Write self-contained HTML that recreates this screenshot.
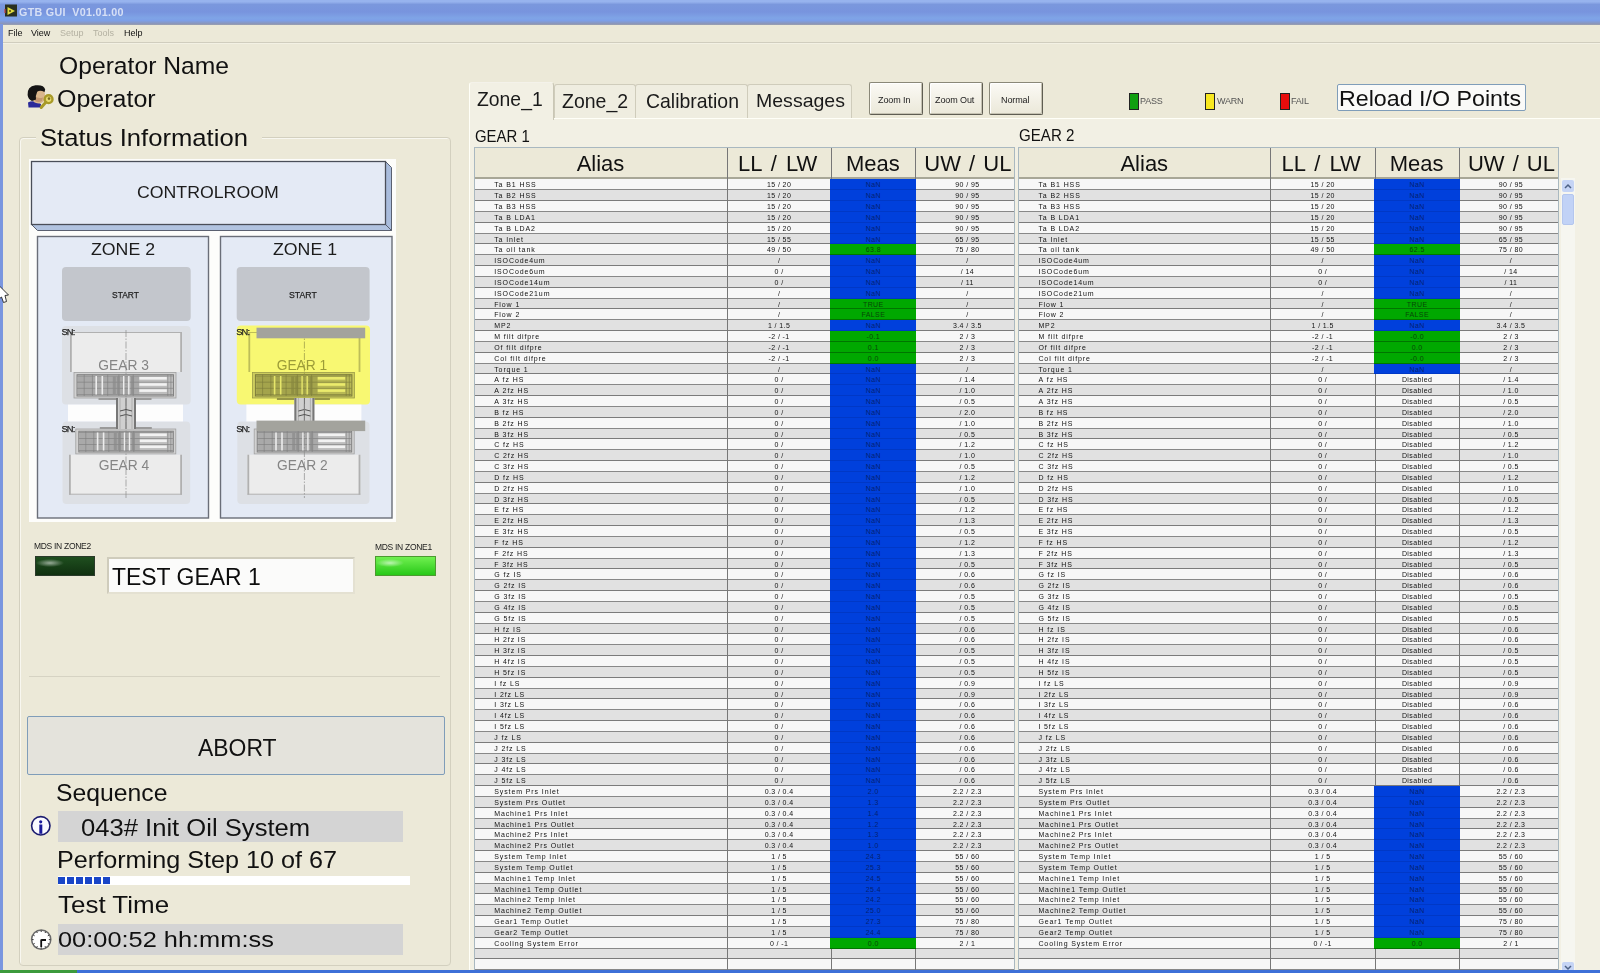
<!DOCTYPE html>
<html><head><meta charset="utf-8">
<style>
*{margin:0;padding:0;box-sizing:border-box}
html,body{width:1600px;height:973px;overflow:hidden;background:#ECE9D8;font-family:"Liberation Sans",sans-serif;color:#000}
.abs{position:absolute}
.t{position:absolute;white-space:pre;line-height:1}
#title{position:absolute;left:0;top:0;width:1600px;height:25px;background:linear-gradient(#97b3ee 0,#97b3ee 1.8px,#7a97dd 4.5px,#7894de 12px,#7fa4e6 18px,#7d9fe7 20.5px,#8a96bc 23.5px,#9aa0b0 25px)}
#lborder{position:absolute;left:0;top:24px;width:3px;height:949px;background:#7a96df}
#menubar{position:absolute;left:3px;top:25px;width:1597px;height:18px;background:#ECE9D8;border-bottom:1px solid #d0cdbe;box-shadow:0 1px 0 #f3f1e4}
.menu{position:absolute;top:28.5px;font-size:9px;color:#111}
.menu.dis{color:#b4b1a2}
#panel{position:absolute;left:469px;top:118px;width:1131px;height:855px;background:#F2F0E4;border-top:1px solid #fffff8;border-left:1px solid #fffff8}
.tab{position:absolute;background:#EFEDE0;border:1px solid #cfccbb;border-bottom:none;border-radius:3px 3px 0 0}
.tab.sel{background:#F2F0E4;border-color:#e0ddd0}
.tabt{position:absolute;font-size:19.5px;color:#1a1a1a;white-space:pre;line-height:1}
.btn{position:absolute;background:linear-gradient(#fbfaf5,#ebe8d9);border:1px solid #8a8878;border-right-color:#5f5d52;border-bottom-color:#5f5d52;box-shadow:inset -1px -1px 0 #c5c2b2, inset 1px 1px 0 #fff;border-radius:2px}
.btnt{position:absolute;font-size:9px;color:#222;white-space:pre;line-height:1;letter-spacing:-0.1px;margin-top:1px}
.leg{position:absolute;top:93px;width:10px;height:17px;border:1px solid #222}
.legt{position:absolute;top:97px;font-size:9px;color:#555;white-space:pre;line-height:1;letter-spacing:-0.2px}
.tbl{position:absolute;top:147px;height:826px;background:#fff;border:1px solid #a9b8c0;border-bottom:none;overflow:hidden}
.hdr{position:absolute;left:0;top:0;height:31px;background:#ECE9D8;border-bottom:2px solid #a8a797}
.h{position:absolute;top:5px;text-align:center;font-size:22px;white-space:pre;line-height:1;color:#111}
.row{position:absolute;left:0;width:100%;height:10.834px}
.rl{position:absolute;left:0;bottom:0;width:100%;height:1px;background:rgba(0,0,0,0.45)}
.row.w{background:#F7F7F7}
.row.g{background:#E1E1E1}
.c{position:absolute;top:1px;height:9.8px;font-size:7px;line-height:9px;white-space:pre;color:#111;letter-spacing:0.9px}
.c.a{left:19px}
.c.n{text-align:center;letter-spacing:0.4px}
.mb{background:#0040DC;color:#052070;top:0;height:10.834px;padding-top:1px;z-index:2;box-shadow:inset 0 -1px 0 rgba(0,0,40,0.12)}
.mg{background:#00A800;color:#074707;top:0;height:10.834px;padding-top:1px;z-index:2;box-shadow:inset 0 -1px 0 rgba(0,0,0,0.3)}
.vl{position:absolute;top:0;width:1px;height:826px;background:#777}
</style></head><body>
<!-- title bar -->
<div id="title"></div>
<svg class="abs" style="left:3px;top:3px" width="16" height="15" viewBox="0 0 16 15"><rect x="2" y="1.5" width="12" height="12" fill="#2a3020"/><path d="M4.5 4 L12 8 L4.5 12 Z" fill="#e0dc40"/><circle cx="7" cy="8" r="1" fill="#504010"/><rect x="1" y="6" width="2" height="4" fill="#c04040" opacity="0.6"/></svg>
<div class="t" style="left:19px;top:7px;font-size:11px;font-weight:bold;color:#d6e0f6;letter-spacing:0.3px;transform:scaleX(0.975);transform-origin:0 0">GTB GUI&nbsp; V01.01.00</div>
<div id="lborder"></div>
<svg class="abs" style="left:0;top:284px;z-index:5" width="12" height="20" viewBox="0 284 12 20"><path d="M-1 285.5 L8.5 295 L5 295.5 L6.5 301.5 L3.5 302.5 L1.5 297 L-1 299 Z" fill="#fff" stroke="#222" stroke-width="0.9"/></svg>
<div id="menubar"></div>
<div class="t menu" style="left:8px">File</div>
<div class="t menu" style="left:31px">View</div>
<div class="t menu dis" style="left:60px">Setup</div>
<div class="t menu dis" style="left:93px">Tools</div>
<div class="t menu" style="left:124px">Help</div>

<!-- left panel -->
<!-- operator icon -->
<svg class="abs" style="left:26px;top:84px" width="30" height="28" viewBox="26 84 30 28">
 <path d="M28 102.5 Q31 100.5 36 101.5 L41 104 L40.5 107.5 L28.5 107.5 Z" fill="#2a2a9a"/>
 <path d="M34 91 Q39 88.5 44.5 90.5 L45.2 97 Q44.5 103.5 38.5 103.5 Q33 103 32.5 99 Z" fill="#d9b68c"/>
 <path d="M34.5 96 Q38 99 43 97.5 L42 101 Q38 103 35 101 Z" fill="#b08060" opacity="0.6"/>
 <path d="M27.6 95 Q27 86.5 35.5 85.3 Q44 84.5 45.2 89.5 L44.5 92 Q40 89.8 37.2 91.8 Q35.4 95.5 36 99.5 L32 101 Q28.2 99.5 27.6 95 Z" fill="#141414"/>
 <circle cx="48.6" cy="99.2" r="3.9" fill="#e8dc70" stroke="#a89a28" stroke-width="2.4"/>
 <circle cx="49" cy="98.6" r="1.3" fill="#7a6e20"/>
 <path d="M45.8 102.2 L41.2 107.5" stroke="#a89a28" stroke-width="3" stroke-linecap="round"/>
</svg>

<!-- group box -->
<div class="abs" style="left:19px;top:137px;width:432px;height:829px;border:1px solid #d3d0bf;border-radius:4px;box-shadow:inset 1px 1px 0 #f8f7f0"></div>
<div class="abs" style="left:36px;top:128px;width:226px;height:20px;background:#ECE9D8"></div>

<!-- diagram -->
<div class="abs" style="left:29px;top:159px;width:367px;height:363px;background:#fdfdfb"></div>
<svg class="abs" style="left:29px;top:159px" width="367" height="363" viewBox="29 159 367 363">
 <polygon points="31.5,224.5 385.5,224.5 391.5,230.5 37.5,230.5" fill="#b1c3e0" stroke="#5a6070" stroke-width="1"/>
 <polygon points="385.5,161.5 391.5,167.5 391.5,230.5 385.5,224.5" fill="#a9bcdc" stroke="#5a6070" stroke-width="1"/>
 <rect x="31.5" y="161.5" width="354" height="63" fill="#e4eaf5" stroke="#4a4e58" stroke-width="1.3"/>
 <rect x="37.5" y="236.5" width="171" height="281.5" fill="#e4eaf5" stroke="#6a6e78" stroke-width="1.4"/>
 <rect x="220.5" y="236.5" width="171.5" height="281.5" fill="#e4eaf5" stroke="#6a6e78" stroke-width="1.4"/>
 <rect x="62" y="267" width="128.7" height="54" rx="4" fill="#c3c6cc"/>
 <rect x="236.7" y="267" width="132.9" height="54" rx="4" fill="#c3c6cc"/>
</svg>
<svg class="abs" style="left:0;top:0" width="400" height="530" viewBox="0 0 400 530">
<rect x="62" y="326" width="128.7" height="78.5" rx="4" fill="#dde0e5"/>
<rect x="62.5" y="421.4" width="127.69999999999999" height="82.6" rx="4" fill="#dde0e5"/>
<rect x="68" y="404.6" width="115" height="16.8" fill="#fdfdfd"/>
<rect x="70" y="332" width="112" height="40" fill="#ececec"/>
<rect x="70" y="332" width="1.8" height="40" fill="#b0b0b0"/>
<rect x="180.2" y="332" width="1.8" height="40" fill="#b0b0b0"/>
<rect x="70" y="332" width="112" height="1" fill="#b0b0b0"/>
<rect x="74" y="372.5" width="102" height="25.5" fill="#d2d2d2" stroke="#a0a0a0" stroke-width="0.8"/>
<rect x="77" y="374.7" width="96.5" height="21.3" fill="#bdbdbd" stroke="#7c7c7c" stroke-width="0.9"/>
<rect x="78" y="376.0" width="61.199999999999996" height="18.5" fill="#a9a9a9"/>
<line x1="77" y1="376.0" x2="173" y2="376.0" stroke="#7c7c7c" stroke-width="0.6"/>
<line x1="77" y1="382.2" x2="173" y2="382.2" stroke="#7c7c7c" stroke-width="0.6"/>
<line x1="77" y1="388.3" x2="173" y2="388.3" stroke="#7c7c7c" stroke-width="0.6"/>
<line x1="77" y1="394.5" x2="173" y2="394.5" stroke="#7c7c7c" stroke-width="0.6"/>
<rect x="139.3" y="377.0" width="27.5" height="2.6" fill="#f2f2f2"/>
<rect x="139.3" y="383.2" width="27.5" height="2.6" fill="#f2f2f2"/>
<rect x="139.3" y="389.3" width="27.5" height="2.6" fill="#f2f2f2"/>
<rect x="95.4" y="376.0" width="1.6" height="18.5" fill="#ededed"/>
<rect x="101.5" y="376.0" width="1.6" height="18.5" fill="#ededed"/>
<rect x="123.0" y="376.0" width="1.4" height="18.5" fill="#ededed"/>
<rect x="128.1" y="376.0" width="1.4" height="18.5" fill="#ededed"/>
<line x1="84.2" y1="374.5" x2="84.2" y2="396.0" stroke="#7c7c7c" stroke-width="0.6"/>
<line x1="92.4" y1="374.5" x2="92.4" y2="396.0" stroke="#7c7c7c" stroke-width="0.6"/>
<line x1="107.7" y1="374.5" x2="107.7" y2="396.0" stroke="#7c7c7c" stroke-width="0.6"/>
<line x1="118.9" y1="374.5" x2="118.9" y2="396.0" stroke="#7c7c7c" stroke-width="0.6"/>
<line x1="133.2" y1="374.5" x2="133.2" y2="396.0" stroke="#7c7c7c" stroke-width="0.6"/>
<line x1="167.8" y1="374.5" x2="167.8" y2="396.0" stroke="#7c7c7c" stroke-width="0.6"/>
<line x1="170.9" y1="374.5" x2="170.9" y2="396.0" stroke="#7c7c7c" stroke-width="0.6"/>
<rect x="112.8" y="376.5" width="3" height="17.5" fill="#8a8a8a" opacity="0.7"/>
<rect x="116.8" y="376.5" width="3" height="17.5" fill="#8a8a8a" opacity="0.7"/>
<rect x="131.1" y="376.5" width="3" height="17.5" fill="#8a8a8a" opacity="0.7"/>
<rect x="98.5" y="398.0" width="53.0" height="2" fill="#9a9a9a"/>
<rect x="75.8" y="429" width="100" height="25" fill="#d2d2d2" stroke="#a0a0a0" stroke-width="0.8"/>
<rect x="78.8" y="431.2" width="94.5" height="20.8" fill="#bdbdbd" stroke="#7c7c7c" stroke-width="0.9"/>
<rect x="79.8" y="432.5" width="60.0" height="18" fill="#a9a9a9"/>
<line x1="78.8" y1="432.5" x2="172.8" y2="432.5" stroke="#7c7c7c" stroke-width="0.6"/>
<line x1="78.8" y1="438.5" x2="172.8" y2="438.5" stroke="#7c7c7c" stroke-width="0.6"/>
<line x1="78.8" y1="444.5" x2="172.8" y2="444.5" stroke="#7c7c7c" stroke-width="0.6"/>
<line x1="78.8" y1="450.5" x2="172.8" y2="450.5" stroke="#7c7c7c" stroke-width="0.6"/>
<rect x="139.8" y="433.5" width="27.0" height="2.6" fill="#f2f2f2"/>
<rect x="139.8" y="439.5" width="27.0" height="2.6" fill="#f2f2f2"/>
<rect x="139.8" y="445.5" width="27.0" height="2.6" fill="#f2f2f2"/>
<rect x="96.8" y="432.5" width="1.6" height="18" fill="#ededed"/>
<rect x="102.8" y="432.5" width="1.6" height="18" fill="#ededed"/>
<rect x="123.8" y="432.5" width="1.4" height="18" fill="#ededed"/>
<rect x="128.8" y="432.5" width="1.4" height="18" fill="#ededed"/>
<line x1="85.8" y1="431" x2="85.8" y2="452" stroke="#7c7c7c" stroke-width="0.6"/>
<line x1="93.8" y1="431" x2="93.8" y2="452" stroke="#7c7c7c" stroke-width="0.6"/>
<line x1="108.8" y1="431" x2="108.8" y2="452" stroke="#7c7c7c" stroke-width="0.6"/>
<line x1="119.8" y1="431" x2="119.8" y2="452" stroke="#7c7c7c" stroke-width="0.6"/>
<line x1="133.8" y1="431" x2="133.8" y2="452" stroke="#7c7c7c" stroke-width="0.6"/>
<line x1="167.8" y1="431" x2="167.8" y2="452" stroke="#7c7c7c" stroke-width="0.6"/>
<line x1="170.8" y1="431" x2="170.8" y2="452" stroke="#7c7c7c" stroke-width="0.6"/>
<rect x="113.8" y="433" width="3" height="17" fill="#8a8a8a" opacity="0.7"/>
<rect x="117.8" y="433" width="3" height="17" fill="#8a8a8a" opacity="0.7"/>
<rect x="131.8" y="433" width="3" height="17" fill="#8a8a8a" opacity="0.7"/>
<rect x="99.8" y="427" width="52.0" height="2" fill="#9a9a9a"/>
<rect x="69" y="454.7" width="113" height="40" fill="#ececec"/>
<rect x="69" y="454.7" width="1.8" height="40" fill="#b0b0b0"/>
<rect x="180.2" y="454.7" width="1.8" height="40" fill="#b0b0b0"/>
<rect x="69" y="493.7" width="113" height="1" fill="#b0b0b0"/>
<rect x="116" y="398" width="20" height="31" fill="#d0d0d0"/>
<rect x="116" y="398" width="2" height="31" fill="#777"/>
<rect x="134" y="398" width="2" height="31" fill="#777"/>
<line x1="126.0" y1="398" x2="126.0" y2="429" stroke="#6a6a6a" stroke-width="1"/>
<line x1="120" y1="398" x2="120" y2="429" stroke="#999" stroke-width="0.6"/>
<line x1="132" y1="398" x2="132" y2="429" stroke="#999" stroke-width="0.6"/>
<path d="M120 411.0 L126.0 409.5 L132 411.0" stroke="#444" stroke-width="0.9" fill="none"/>
<path d="M120 416.0 L126.0 414.5 L132 416.0" stroke="#444" stroke-width="0.9" fill="none"/>
<line x1="126" y1="330" x2="126" y2="498" stroke="#8c8c8c" stroke-width="0.7" stroke-dasharray="7 1.5 1.5 1.5"/>
<text x="123.6" y="370.3" font-family="Liberation Sans" font-size="13.8" fill="#858585" text-anchor="middle">GEAR 3</text>
<text x="124" y="470" font-family="Liberation Sans" font-size="13.8" fill="#858585" text-anchor="middle">GEAR 4</text>
<text x="61.4" y="335" font-family="Liberation Sans" font-size="9.3" fill="#222" stroke="#222" stroke-width="0.25" letter-spacing="-0.8">SN:</text>
<text x="61.4" y="431.5" font-family="Liberation Sans" font-size="9.3" fill="#222" stroke="#222" stroke-width="0.25" letter-spacing="-0.8">SN:</text>
<rect x="236.8" y="325.6" width="133.2" height="79" rx="4" fill="#f8f872"/>
<rect x="237.3" y="421.4" width="132.2" height="82.6" rx="4" fill="#dde0e5"/>
<rect x="246.4" y="404.6" width="115" height="16.8" fill="#fdfdfd"/>
<g style="mix-blend-mode:multiply">
<rect x="248.4" y="332" width="112" height="40" fill="#ffffff"/>
<rect x="248.4" y="332" width="1.8" height="40" fill="#c4c4c4"/>
<rect x="358.59999999999997" y="332" width="1.8" height="40" fill="#c4c4c4"/>
<rect x="248.4" y="332" width="112" height="1" fill="#c4c4c4"/>
<rect x="252.4" y="372.5" width="102" height="25.5" fill="#d2d2d2" stroke="#a0a0a0" stroke-width="0.8"/>
<rect x="255.4" y="374.7" width="96.5" height="21.3" fill="#bdbdbd" stroke="#7c7c7c" stroke-width="0.9"/>
<rect x="256.4" y="376.0" width="61.199999999999996" height="18.5" fill="#a9a9a9"/>
<line x1="255.4" y1="376.0" x2="351.4" y2="376.0" stroke="#7c7c7c" stroke-width="0.6"/>
<line x1="255.4" y1="382.2" x2="351.4" y2="382.2" stroke="#7c7c7c" stroke-width="0.6"/>
<line x1="255.4" y1="388.3" x2="351.4" y2="388.3" stroke="#7c7c7c" stroke-width="0.6"/>
<line x1="255.4" y1="394.5" x2="351.4" y2="394.5" stroke="#7c7c7c" stroke-width="0.6"/>
<rect x="317.7" y="377.0" width="27.5" height="2.6" fill="#f2f2f2"/>
<rect x="317.7" y="383.2" width="27.5" height="2.6" fill="#f2f2f2"/>
<rect x="317.7" y="389.3" width="27.5" height="2.6" fill="#f2f2f2"/>
<rect x="273.8" y="376.0" width="1.6" height="18.5" fill="#ededed"/>
<rect x="279.9" y="376.0" width="1.6" height="18.5" fill="#ededed"/>
<rect x="301.4" y="376.0" width="1.4" height="18.5" fill="#ededed"/>
<rect x="306.5" y="376.0" width="1.4" height="18.5" fill="#ededed"/>
<line x1="262.6" y1="374.5" x2="262.6" y2="396.0" stroke="#7c7c7c" stroke-width="0.6"/>
<line x1="270.8" y1="374.5" x2="270.8" y2="396.0" stroke="#7c7c7c" stroke-width="0.6"/>
<line x1="286.1" y1="374.5" x2="286.1" y2="396.0" stroke="#7c7c7c" stroke-width="0.6"/>
<line x1="297.3" y1="374.5" x2="297.3" y2="396.0" stroke="#7c7c7c" stroke-width="0.6"/>
<line x1="311.6" y1="374.5" x2="311.6" y2="396.0" stroke="#7c7c7c" stroke-width="0.6"/>
<line x1="346.2" y1="374.5" x2="346.2" y2="396.0" stroke="#7c7c7c" stroke-width="0.6"/>
<line x1="349.3" y1="374.5" x2="349.3" y2="396.0" stroke="#7c7c7c" stroke-width="0.6"/>
<rect x="291.2" y="376.5" width="3" height="17.5" fill="#8a8a8a" opacity="0.7"/>
<rect x="295.2" y="376.5" width="3" height="17.5" fill="#8a8a8a" opacity="0.7"/>
<rect x="309.5" y="376.5" width="3" height="17.5" fill="#8a8a8a" opacity="0.7"/>
<rect x="276.9" y="398.0" width="53.0" height="2" fill="#9a9a9a"/>
<line x1="304.4" y1="330" x2="304.4" y2="404" stroke="#9a9a9a" stroke-width="0.7" stroke-dasharray="7 1.5 1.5 1.5"/>
</g>
<rect x="254.2" y="429" width="100" height="25" fill="#d2d2d2" stroke="#a0a0a0" stroke-width="0.8"/>
<rect x="257.2" y="431.2" width="94.5" height="20.8" fill="#bdbdbd" stroke="#7c7c7c" stroke-width="0.9"/>
<rect x="258.2" y="432.5" width="60.0" height="18" fill="#a9a9a9"/>
<line x1="257.2" y1="432.5" x2="351.2" y2="432.5" stroke="#7c7c7c" stroke-width="0.6"/>
<line x1="257.2" y1="438.5" x2="351.2" y2="438.5" stroke="#7c7c7c" stroke-width="0.6"/>
<line x1="257.2" y1="444.5" x2="351.2" y2="444.5" stroke="#7c7c7c" stroke-width="0.6"/>
<line x1="257.2" y1="450.5" x2="351.2" y2="450.5" stroke="#7c7c7c" stroke-width="0.6"/>
<rect x="318.2" y="433.5" width="27.0" height="2.6" fill="#f2f2f2"/>
<rect x="318.2" y="439.5" width="27.0" height="2.6" fill="#f2f2f2"/>
<rect x="318.2" y="445.5" width="27.0" height="2.6" fill="#f2f2f2"/>
<rect x="275.2" y="432.5" width="1.6" height="18" fill="#ededed"/>
<rect x="281.2" y="432.5" width="1.6" height="18" fill="#ededed"/>
<rect x="302.2" y="432.5" width="1.4" height="18" fill="#ededed"/>
<rect x="307.2" y="432.5" width="1.4" height="18" fill="#ededed"/>
<line x1="264.2" y1="431" x2="264.2" y2="452" stroke="#7c7c7c" stroke-width="0.6"/>
<line x1="272.2" y1="431" x2="272.2" y2="452" stroke="#7c7c7c" stroke-width="0.6"/>
<line x1="287.2" y1="431" x2="287.2" y2="452" stroke="#7c7c7c" stroke-width="0.6"/>
<line x1="298.2" y1="431" x2="298.2" y2="452" stroke="#7c7c7c" stroke-width="0.6"/>
<line x1="312.2" y1="431" x2="312.2" y2="452" stroke="#7c7c7c" stroke-width="0.6"/>
<line x1="346.2" y1="431" x2="346.2" y2="452" stroke="#7c7c7c" stroke-width="0.6"/>
<line x1="349.2" y1="431" x2="349.2" y2="452" stroke="#7c7c7c" stroke-width="0.6"/>
<rect x="292.2" y="433" width="3" height="17" fill="#8a8a8a" opacity="0.7"/>
<rect x="296.2" y="433" width="3" height="17" fill="#8a8a8a" opacity="0.7"/>
<rect x="310.2" y="433" width="3" height="17" fill="#8a8a8a" opacity="0.7"/>
<rect x="278.2" y="427" width="52.0" height="2" fill="#9a9a9a"/>
<rect x="247.4" y="454.7" width="113" height="40" fill="#ececec"/>
<rect x="247.4" y="454.7" width="1.8" height="40" fill="#b0b0b0"/>
<rect x="358.59999999999997" y="454.7" width="1.8" height="40" fill="#b0b0b0"/>
<rect x="247.4" y="493.7" width="113" height="1" fill="#b0b0b0"/>
<rect x="294.4" y="398" width="20" height="31" fill="#d0d0d0"/>
<rect x="294.4" y="398" width="2" height="31" fill="#777"/>
<rect x="312.4" y="398" width="2" height="31" fill="#777"/>
<line x1="304.4" y1="398" x2="304.4" y2="429" stroke="#6a6a6a" stroke-width="1"/>
<line x1="298.4" y1="398" x2="298.4" y2="429" stroke="#999" stroke-width="0.6"/>
<line x1="310.4" y1="398" x2="310.4" y2="429" stroke="#999" stroke-width="0.6"/>
<path d="M298.4 411.0 L304.4 409.5 L310.4 411.0" stroke="#444" stroke-width="0.9" fill="none"/>
<path d="M298.4 416.0 L304.4 414.5 L310.4 416.0" stroke="#444" stroke-width="0.9" fill="none"/>
<line x1="304.4" y1="404" x2="304.4" y2="498" stroke="#8c8c8c" stroke-width="0.7" stroke-dasharray="7 1.5 1.5 1.5"/>
<text x="302.0" y="370.3" font-family="Liberation Sans" font-size="13.8" fill="#9c9c38" text-anchor="middle">GEAR 1</text>
<text x="302.4" y="470" font-family="Liberation Sans" font-size="13.8" fill="#858585" text-anchor="middle">GEAR 2</text>
<rect x="256.5" y="327.7" width="108.7" height="10.6" fill="#a3a39d"/>
<rect x="256.5" y="420.6" width="108.7" height="10.5" fill="#a3a39d"/>
<text x="236.20000000000002" y="335" font-family="Liberation Sans" font-size="9.3" fill="#222" stroke="#222" stroke-width="0.25" letter-spacing="-0.8">SN:</text>
<text x="236.20000000000002" y="431.5" font-family="Liberation Sans" font-size="9.3" fill="#222" stroke="#222" stroke-width="0.25" letter-spacing="-0.8">SN:</text>
</svg>

<!-- MDS -->
<div class="t" style="left:34px;top:542px;font-size:8.5px;color:#222;letter-spacing:-0.3px">MDS IN ZONE2</div>
<div class="abs" style="left:35px;top:556px;width:60px;height:20px;background:radial-gradient(ellipse 14px 4px at 14px 6px,rgba(255,255,255,0.55),rgba(255,255,255,0) 100%),linear-gradient(#1f4f1f,#103010);border:1px solid #2a3a2a"></div>
<div class="t" style="left:375px;top:543px;font-size:8.5px;color:#222;letter-spacing:-0.3px">MDS IN ZONE1</div>
<div class="abs" style="left:375px;top:556px;width:61px;height:20px;background:radial-gradient(ellipse 14px 4px at 14px 6px,rgba(255,255,255,0.6),rgba(255,255,255,0) 100%),linear-gradient(#70f050,#28c818);border:1px solid #4c9a30"></div>
<div class="abs" style="left:107px;top:557px;width:248px;height:37px;background:#fbfbfa;border:2px solid #e4e1d2;border-top-color:#cfccbc;border-left-color:#cfccbc"></div>

<div class="abs" style="left:29px;top:676px;width:411px;height:1px;background:#d6d3c3"></div>
<div class="abs" style="left:27px;top:716px;width:418px;height:59px;background:#e4e3dc;border:1px solid #7f9db9;border-radius:2px"></div>

<div class="abs" style="left:57.5px;top:810.5px;width:345px;height:31.5px;background:#d4d4d4"></div>
<svg class="abs" style="left:30px;top:815px" width="22" height="22" viewBox="0 0 22 22"><circle cx="10.8" cy="10.8" r="9.2" fill="#fafaff" stroke="#1c1c70" stroke-width="1.6"/><circle cx="10.7" cy="6.8" r="1.6" fill="#1a1a9a"/><rect x="9.3" y="9.5" width="3" height="9.3" fill="#1a1a9a"/></svg>
<div class="abs" style="left:57.5px;top:876px;width:352px;height:8.5px;background:#fff"></div>
<div class="abs" style="left:58px;top:877px;width:54px;height:7px;background:repeating-linear-gradient(90deg,#1a46c8 0,#1a46c8 7px,transparent 7px,transparent 9px)"></div>
<div class="abs" style="left:57.5px;top:924px;width:345px;height:31px;background:#d4d4d4"></div>
<svg class="abs" style="left:30px;top:928px" width="22" height="23" viewBox="0 0 22 23"><circle cx="11.2" cy="11.6" r="9.6" fill="#fff" stroke="#6a6a6a" stroke-width="1.5"/><line x1="18.80" y1="11.60" x2="20.40" y2="11.60" stroke="#333" stroke-width="1"/><line x1="17.78" y1="15.40" x2="19.17" y2="16.20" stroke="#333" stroke-width="1"/><line x1="15.00" y1="18.18" x2="15.80" y2="19.57" stroke="#333" stroke-width="1"/><line x1="11.20" y1="19.20" x2="11.20" y2="20.80" stroke="#333" stroke-width="1"/><line x1="7.40" y1="18.18" x2="6.60" y2="19.57" stroke="#333" stroke-width="1"/><line x1="4.62" y1="15.40" x2="3.23" y2="16.20" stroke="#333" stroke-width="1"/><line x1="3.60" y1="11.60" x2="2.00" y2="11.60" stroke="#333" stroke-width="1"/><line x1="4.62" y1="7.80" x2="3.23" y2="7.00" stroke="#333" stroke-width="1"/><line x1="7.40" y1="5.02" x2="6.60" y2="3.63" stroke="#333" stroke-width="1"/><line x1="11.20" y1="4.00" x2="11.20" y2="2.40" stroke="#333" stroke-width="1"/><line x1="15.00" y1="5.02" x2="15.80" y2="3.63" stroke="#333" stroke-width="1"/><line x1="17.78" y1="7.80" x2="19.17" y2="7.00" stroke="#333" stroke-width="1"/><path d="M11.2 11.6 V19 M11.2 12 H16" stroke="#111" stroke-width="1.8"/></svg>

<!-- right side -->
<div id="panel"></div>
<div class="tab" style="left:554px;top:84px;width:82px;height:34px"></div>
<div class="tab" style="left:635px;top:84px;width:113px;height:34px"></div>
<div class="tab" style="left:747px;top:84px;width:105px;height:34px"></div>
<div class="tab sel" style="left:469px;top:82px;width:85px;height:38px;border-bottom:none;background:#F2F0E4;border-left-color:#fffff8;border-top-color:#f4f2ea;border-right-color:#c9c6b5"></div>

<div class="btn" style="left:869px;top:82px;width:54px;height:33px"></div>
<div class="btnt" style="left:878px;top:95px">Zoom In</div>
<div class="btn" style="left:929px;top:82px;width:54px;height:33px"></div>
<div class="btnt" style="left:935px;top:95px">Zoom Out</div>
<div class="btn" style="left:989px;top:82px;width:54px;height:33px"></div>
<div class="btnt" style="left:1001px;top:95px">Normal</div>

<div class="leg" style="left:1129px;background:#10a010"></div>
<div class="legt" style="left:1140px">PASS</div>
<div class="leg" style="left:1205px;background:#f8e820"></div>
<div class="legt" style="left:1217px">WARN</div>
<div class="leg" style="left:1280px;background:#e80c0c"></div>
<div class="legt" style="left:1291px">FAIL</div>

<div class="abs" style="left:1337px;top:84px;width:189px;height:27px;background:#fafaf8;border:1px solid #7f9db9;border-radius:2px"></div>


<div class="tbl" style="left:474.2px;width:541.3px">
<div class="hdr" style="width:539.3px"><span class="h" style="left:-1px;width:252.6px">Alias</span><span class="h" style="left:250.1px;width:104.6px;word-spacing:3px">LL / LW</span><span class="h" style="left:355.7px;width:83.9px">Meas</span><span class="h" style="left:443.6px;width:98.2px;word-spacing:2px">UW / UL</span></div>
<div class="row w" style="top:31.40px"><span class="c a">Ta&nbsp;B1&nbsp;HSS</span><span class="c n" style="left:251.6px;width:104.6px">15 / 20</span><span class="c n mb" style="left:355.2px;width:85.9px">NaN</span><span class="c n" style="left:442.1px;width:100.2px">90 / 95</span><i class="rl"></i></div>
<div class="row g" style="top:42.23px"><span class="c a">Ta&nbsp;B2&nbsp;HSS</span><span class="c n" style="left:251.6px;width:104.6px">15 / 20</span><span class="c n mb" style="left:355.2px;width:85.9px">NaN</span><span class="c n" style="left:442.1px;width:100.2px">90 / 95</span><i class="rl"></i></div>
<div class="row w" style="top:53.07px"><span class="c a">Ta&nbsp;B3&nbsp;HSS</span><span class="c n" style="left:251.6px;width:104.6px">15 / 20</span><span class="c n mb" style="left:355.2px;width:85.9px">NaN</span><span class="c n" style="left:442.1px;width:100.2px">90 / 95</span><i class="rl"></i></div>
<div class="row g" style="top:63.90px"><span class="c a">Ta&nbsp;B&nbsp;LDA1</span><span class="c n" style="left:251.6px;width:104.6px">15 / 20</span><span class="c n mb" style="left:355.2px;width:85.9px">NaN</span><span class="c n" style="left:442.1px;width:100.2px">90 / 95</span><i class="rl"></i></div>
<div class="row w" style="top:74.74px"><span class="c a">Ta&nbsp;B&nbsp;LDA2</span><span class="c n" style="left:251.6px;width:104.6px">15 / 20</span><span class="c n mb" style="left:355.2px;width:85.9px">NaN</span><span class="c n" style="left:442.1px;width:100.2px">90 / 95</span><i class="rl"></i></div>
<div class="row g" style="top:85.57px"><span class="c a">Ta&nbsp;Inlet</span><span class="c n" style="left:251.6px;width:104.6px">15 / 55</span><span class="c n mb" style="left:355.2px;width:85.9px">NaN</span><span class="c n" style="left:442.1px;width:100.2px">65 / 95</span><i class="rl"></i></div>
<div class="row w" style="top:96.40px"><span class="c a">Ta&nbsp;oil&nbsp;tank</span><span class="c n" style="left:251.6px;width:104.6px">49 / 50</span><span class="c n mg" style="left:355.2px;width:85.9px">63.8</span><span class="c n" style="left:442.1px;width:100.2px">75 / 80</span><i class="rl"></i></div>
<div class="row g" style="top:107.24px"><span class="c a">ISOCode4um</span><span class="c n" style="left:251.6px;width:104.6px">/</span><span class="c n mb" style="left:355.2px;width:85.9px">NaN</span><span class="c n" style="left:442.1px;width:100.2px">/</span><i class="rl"></i></div>
<div class="row w" style="top:118.07px"><span class="c a">ISOCode6um</span><span class="c n" style="left:251.6px;width:104.6px">0 /</span><span class="c n mb" style="left:355.2px;width:85.9px">NaN</span><span class="c n" style="left:442.1px;width:100.2px">/ 14</span><i class="rl"></i></div>
<div class="row g" style="top:128.91px"><span class="c a">ISOCode14um</span><span class="c n" style="left:251.6px;width:104.6px">0 /</span><span class="c n mb" style="left:355.2px;width:85.9px">NaN</span><span class="c n" style="left:442.1px;width:100.2px">/ 11</span><i class="rl"></i></div>
<div class="row w" style="top:139.74px"><span class="c a">ISOCode21um</span><span class="c n" style="left:251.6px;width:104.6px">/</span><span class="c n mb" style="left:355.2px;width:85.9px">NaN</span><span class="c n" style="left:442.1px;width:100.2px">/</span><i class="rl"></i></div>
<div class="row g" style="top:150.57px"><span class="c a">Flow&nbsp;1</span><span class="c n" style="left:251.6px;width:104.6px">/</span><span class="c n mg" style="left:355.2px;width:85.9px">TRUE</span><span class="c n" style="left:442.1px;width:100.2px">/</span><i class="rl"></i></div>
<div class="row w" style="top:161.41px"><span class="c a">Flow&nbsp;2</span><span class="c n" style="left:251.6px;width:104.6px">/</span><span class="c n mg" style="left:355.2px;width:85.9px">FALSE</span><span class="c n" style="left:442.1px;width:100.2px">/</span><i class="rl"></i></div>
<div class="row g" style="top:172.24px"><span class="c a">MP2</span><span class="c n" style="left:251.6px;width:104.6px">1 / 1.5</span><span class="c n mb" style="left:355.2px;width:85.9px">NaN</span><span class="c n" style="left:442.1px;width:100.2px">3.4 / 3.5</span><i class="rl"></i></div>
<div class="row w" style="top:183.08px"><span class="c a">M&nbsp;filt&nbsp;difpre</span><span class="c n" style="left:251.6px;width:104.6px">-2 / -1</span><span class="c n mg" style="left:355.2px;width:85.9px">-0.1</span><span class="c n" style="left:442.1px;width:100.2px">2 / 3</span><i class="rl"></i></div>
<div class="row g" style="top:193.91px"><span class="c a">Of&nbsp;filt&nbsp;difpre</span><span class="c n" style="left:251.6px;width:104.6px">-2 / -1</span><span class="c n mg" style="left:355.2px;width:85.9px">0.1</span><span class="c n" style="left:442.1px;width:100.2px">2 / 3</span><i class="rl"></i></div>
<div class="row w" style="top:204.74px"><span class="c a">Col&nbsp;filt&nbsp;difpre</span><span class="c n" style="left:251.6px;width:104.6px">-2 / -1</span><span class="c n mg" style="left:355.2px;width:85.9px">0.0</span><span class="c n" style="left:442.1px;width:100.2px">2 / 3</span><i class="rl"></i></div>
<div class="row g" style="top:215.58px"><span class="c a">Torque&nbsp;1</span><span class="c n" style="left:251.6px;width:104.6px">/</span><span class="c n mb" style="left:355.2px;width:85.9px">NaN</span><span class="c n" style="left:442.1px;width:100.2px">/</span><i class="rl"></i></div>
<div class="row w" style="top:226.41px"><span class="c a">A&nbsp;fz&nbsp;HS</span><span class="c n" style="left:251.6px;width:104.6px">0 /</span><span class="c n mb" style="left:355.2px;width:85.9px">NaN</span><span class="c n" style="left:442.1px;width:100.2px">/ 1.4</span><i class="rl"></i></div>
<div class="row g" style="top:237.25px"><span class="c a">A&nbsp;2fz&nbsp;HS</span><span class="c n" style="left:251.6px;width:104.6px">0 /</span><span class="c n mb" style="left:355.2px;width:85.9px">NaN</span><span class="c n" style="left:442.1px;width:100.2px">/ 1.0</span><i class="rl"></i></div>
<div class="row w" style="top:248.08px"><span class="c a">A&nbsp;3fz&nbsp;HS</span><span class="c n" style="left:251.6px;width:104.6px">0 /</span><span class="c n mb" style="left:355.2px;width:85.9px">NaN</span><span class="c n" style="left:442.1px;width:100.2px">/ 0.5</span><i class="rl"></i></div>
<div class="row g" style="top:258.91px"><span class="c a">B&nbsp;fz&nbsp;HS</span><span class="c n" style="left:251.6px;width:104.6px">0 /</span><span class="c n mb" style="left:355.2px;width:85.9px">NaN</span><span class="c n" style="left:442.1px;width:100.2px">/ 2.0</span><i class="rl"></i></div>
<div class="row w" style="top:269.75px"><span class="c a">B&nbsp;2fz&nbsp;HS</span><span class="c n" style="left:251.6px;width:104.6px">0 /</span><span class="c n mb" style="left:355.2px;width:85.9px">NaN</span><span class="c n" style="left:442.1px;width:100.2px">/ 1.0</span><i class="rl"></i></div>
<div class="row g" style="top:280.58px"><span class="c a">B&nbsp;3fz&nbsp;HS</span><span class="c n" style="left:251.6px;width:104.6px">0 /</span><span class="c n mb" style="left:355.2px;width:85.9px">NaN</span><span class="c n" style="left:442.1px;width:100.2px">/ 0.5</span><i class="rl"></i></div>
<div class="row w" style="top:291.42px"><span class="c a">C&nbsp;fz&nbsp;HS</span><span class="c n" style="left:251.6px;width:104.6px">0 /</span><span class="c n mb" style="left:355.2px;width:85.9px">NaN</span><span class="c n" style="left:442.1px;width:100.2px">/ 1.2</span><i class="rl"></i></div>
<div class="row g" style="top:302.25px"><span class="c a">C&nbsp;2fz&nbsp;HS</span><span class="c n" style="left:251.6px;width:104.6px">0 /</span><span class="c n mb" style="left:355.2px;width:85.9px">NaN</span><span class="c n" style="left:442.1px;width:100.2px">/ 1.0</span><i class="rl"></i></div>
<div class="row w" style="top:313.08px"><span class="c a">C&nbsp;3fz&nbsp;HS</span><span class="c n" style="left:251.6px;width:104.6px">0 /</span><span class="c n mb" style="left:355.2px;width:85.9px">NaN</span><span class="c n" style="left:442.1px;width:100.2px">/ 0.5</span><i class="rl"></i></div>
<div class="row g" style="top:323.92px"><span class="c a">D&nbsp;fz&nbsp;HS</span><span class="c n" style="left:251.6px;width:104.6px">0 /</span><span class="c n mb" style="left:355.2px;width:85.9px">NaN</span><span class="c n" style="left:442.1px;width:100.2px">/ 1.2</span><i class="rl"></i></div>
<div class="row w" style="top:334.75px"><span class="c a">D&nbsp;2fz&nbsp;HS</span><span class="c n" style="left:251.6px;width:104.6px">0 /</span><span class="c n mb" style="left:355.2px;width:85.9px">NaN</span><span class="c n" style="left:442.1px;width:100.2px">/ 1.0</span><i class="rl"></i></div>
<div class="row g" style="top:345.59px"><span class="c a">D&nbsp;3fz&nbsp;HS</span><span class="c n" style="left:251.6px;width:104.6px">0 /</span><span class="c n mb" style="left:355.2px;width:85.9px">NaN</span><span class="c n" style="left:442.1px;width:100.2px">/ 0.5</span><i class="rl"></i></div>
<div class="row w" style="top:356.42px"><span class="c a">E&nbsp;fz&nbsp;HS</span><span class="c n" style="left:251.6px;width:104.6px">0 /</span><span class="c n mb" style="left:355.2px;width:85.9px">NaN</span><span class="c n" style="left:442.1px;width:100.2px">/ 1.2</span><i class="rl"></i></div>
<div class="row g" style="top:367.25px"><span class="c a">E&nbsp;2fz&nbsp;HS</span><span class="c n" style="left:251.6px;width:104.6px">0 /</span><span class="c n mb" style="left:355.2px;width:85.9px">NaN</span><span class="c n" style="left:442.1px;width:100.2px">/ 1.3</span><i class="rl"></i></div>
<div class="row w" style="top:378.09px"><span class="c a">E&nbsp;3fz&nbsp;HS</span><span class="c n" style="left:251.6px;width:104.6px">0 /</span><span class="c n mb" style="left:355.2px;width:85.9px">NaN</span><span class="c n" style="left:442.1px;width:100.2px">/ 0.5</span><i class="rl"></i></div>
<div class="row g" style="top:388.92px"><span class="c a">F&nbsp;fz&nbsp;HS</span><span class="c n" style="left:251.6px;width:104.6px">0 /</span><span class="c n mb" style="left:355.2px;width:85.9px">NaN</span><span class="c n" style="left:442.1px;width:100.2px">/ 1.2</span><i class="rl"></i></div>
<div class="row w" style="top:399.76px"><span class="c a">F&nbsp;2fz&nbsp;HS</span><span class="c n" style="left:251.6px;width:104.6px">0 /</span><span class="c n mb" style="left:355.2px;width:85.9px">NaN</span><span class="c n" style="left:442.1px;width:100.2px">/ 1.3</span><i class="rl"></i></div>
<div class="row g" style="top:410.59px"><span class="c a">F&nbsp;3fz&nbsp;HS</span><span class="c n" style="left:251.6px;width:104.6px">0 /</span><span class="c n mb" style="left:355.2px;width:85.9px">NaN</span><span class="c n" style="left:442.1px;width:100.2px">/ 0.5</span><i class="rl"></i></div>
<div class="row w" style="top:421.42px"><span class="c a">G&nbsp;fz&nbsp;IS</span><span class="c n" style="left:251.6px;width:104.6px">0 /</span><span class="c n mb" style="left:355.2px;width:85.9px">NaN</span><span class="c n" style="left:442.1px;width:100.2px">/ 0.6</span><i class="rl"></i></div>
<div class="row g" style="top:432.26px"><span class="c a">G&nbsp;2fz&nbsp;IS</span><span class="c n" style="left:251.6px;width:104.6px">0 /</span><span class="c n mb" style="left:355.2px;width:85.9px">NaN</span><span class="c n" style="left:442.1px;width:100.2px">/ 0.6</span><i class="rl"></i></div>
<div class="row w" style="top:443.09px"><span class="c a">G&nbsp;3fz&nbsp;IS</span><span class="c n" style="left:251.6px;width:104.6px">0 /</span><span class="c n mb" style="left:355.2px;width:85.9px">NaN</span><span class="c n" style="left:442.1px;width:100.2px">/ 0.5</span><i class="rl"></i></div>
<div class="row g" style="top:453.93px"><span class="c a">G&nbsp;4fz&nbsp;IS</span><span class="c n" style="left:251.6px;width:104.6px">0 /</span><span class="c n mb" style="left:355.2px;width:85.9px">NaN</span><span class="c n" style="left:442.1px;width:100.2px">/ 0.5</span><i class="rl"></i></div>
<div class="row w" style="top:464.76px"><span class="c a">G&nbsp;5fz&nbsp;IS</span><span class="c n" style="left:251.6px;width:104.6px">0 /</span><span class="c n mb" style="left:355.2px;width:85.9px">NaN</span><span class="c n" style="left:442.1px;width:100.2px">/ 0.5</span><i class="rl"></i></div>
<div class="row g" style="top:475.59px"><span class="c a">H&nbsp;fz&nbsp;IS</span><span class="c n" style="left:251.6px;width:104.6px">0 /</span><span class="c n mb" style="left:355.2px;width:85.9px">NaN</span><span class="c n" style="left:442.1px;width:100.2px">/ 0.6</span><i class="rl"></i></div>
<div class="row w" style="top:486.43px"><span class="c a">H&nbsp;2fz&nbsp;IS</span><span class="c n" style="left:251.6px;width:104.6px">0 /</span><span class="c n mb" style="left:355.2px;width:85.9px">NaN</span><span class="c n" style="left:442.1px;width:100.2px">/ 0.6</span><i class="rl"></i></div>
<div class="row g" style="top:497.26px"><span class="c a">H&nbsp;3fz&nbsp;IS</span><span class="c n" style="left:251.6px;width:104.6px">0 /</span><span class="c n mb" style="left:355.2px;width:85.9px">NaN</span><span class="c n" style="left:442.1px;width:100.2px">/ 0.5</span><i class="rl"></i></div>
<div class="row w" style="top:508.10px"><span class="c a">H&nbsp;4fz&nbsp;IS</span><span class="c n" style="left:251.6px;width:104.6px">0 /</span><span class="c n mb" style="left:355.2px;width:85.9px">NaN</span><span class="c n" style="left:442.1px;width:100.2px">/ 0.5</span><i class="rl"></i></div>
<div class="row g" style="top:518.93px"><span class="c a">H&nbsp;5fz&nbsp;IS</span><span class="c n" style="left:251.6px;width:104.6px">0 /</span><span class="c n mb" style="left:355.2px;width:85.9px">NaN</span><span class="c n" style="left:442.1px;width:100.2px">/ 0.5</span><i class="rl"></i></div>
<div class="row w" style="top:529.76px"><span class="c a">I&nbsp;fz&nbsp;LS</span><span class="c n" style="left:251.6px;width:104.6px">0 /</span><span class="c n mb" style="left:355.2px;width:85.9px">NaN</span><span class="c n" style="left:442.1px;width:100.2px">/ 0.9</span><i class="rl"></i></div>
<div class="row g" style="top:540.60px"><span class="c a">I&nbsp;2fz&nbsp;LS</span><span class="c n" style="left:251.6px;width:104.6px">0 /</span><span class="c n mb" style="left:355.2px;width:85.9px">NaN</span><span class="c n" style="left:442.1px;width:100.2px">/ 0.9</span><i class="rl"></i></div>
<div class="row w" style="top:551.43px"><span class="c a">I&nbsp;3fz&nbsp;LS</span><span class="c n" style="left:251.6px;width:104.6px">0 /</span><span class="c n mb" style="left:355.2px;width:85.9px">NaN</span><span class="c n" style="left:442.1px;width:100.2px">/ 0.6</span><i class="rl"></i></div>
<div class="row g" style="top:562.27px"><span class="c a">I&nbsp;4fz&nbsp;LS</span><span class="c n" style="left:251.6px;width:104.6px">0 /</span><span class="c n mb" style="left:355.2px;width:85.9px">NaN</span><span class="c n" style="left:442.1px;width:100.2px">/ 0.6</span><i class="rl"></i></div>
<div class="row w" style="top:573.10px"><span class="c a">I&nbsp;5fz&nbsp;LS</span><span class="c n" style="left:251.6px;width:104.6px">0 /</span><span class="c n mb" style="left:355.2px;width:85.9px">NaN</span><span class="c n" style="left:442.1px;width:100.2px">/ 0.6</span><i class="rl"></i></div>
<div class="row g" style="top:583.93px"><span class="c a">J&nbsp;fz&nbsp;LS</span><span class="c n" style="left:251.6px;width:104.6px">0 /</span><span class="c n mb" style="left:355.2px;width:85.9px">NaN</span><span class="c n" style="left:442.1px;width:100.2px">/ 0.6</span><i class="rl"></i></div>
<div class="row w" style="top:594.77px"><span class="c a">J&nbsp;2fz&nbsp;LS</span><span class="c n" style="left:251.6px;width:104.6px">0 /</span><span class="c n mb" style="left:355.2px;width:85.9px">NaN</span><span class="c n" style="left:442.1px;width:100.2px">/ 0.6</span><i class="rl"></i></div>
<div class="row g" style="top:605.60px"><span class="c a">J&nbsp;3fz&nbsp;LS</span><span class="c n" style="left:251.6px;width:104.6px">0 /</span><span class="c n mb" style="left:355.2px;width:85.9px">NaN</span><span class="c n" style="left:442.1px;width:100.2px">/ 0.6</span><i class="rl"></i></div>
<div class="row w" style="top:616.44px"><span class="c a">J&nbsp;4fz&nbsp;LS</span><span class="c n" style="left:251.6px;width:104.6px">0 /</span><span class="c n mb" style="left:355.2px;width:85.9px">NaN</span><span class="c n" style="left:442.1px;width:100.2px">/ 0.6</span><i class="rl"></i></div>
<div class="row g" style="top:627.27px"><span class="c a">J&nbsp;5fz&nbsp;LS</span><span class="c n" style="left:251.6px;width:104.6px">0 /</span><span class="c n mb" style="left:355.2px;width:85.9px">NaN</span><span class="c n" style="left:442.1px;width:100.2px">/ 0.6</span><i class="rl"></i></div>
<div class="row w" style="top:638.10px"><span class="c a">System&nbsp;Prs&nbsp;Inlet</span><span class="c n" style="left:251.6px;width:104.6px">0.3 / 0.4</span><span class="c n mb" style="left:355.2px;width:85.9px">2.0</span><span class="c n" style="left:442.1px;width:100.2px">2.2 / 2.3</span><i class="rl"></i></div>
<div class="row g" style="top:648.94px"><span class="c a">System&nbsp;Prs&nbsp;Outlet</span><span class="c n" style="left:251.6px;width:104.6px">0.3 / 0.4</span><span class="c n mb" style="left:355.2px;width:85.9px">1.3</span><span class="c n" style="left:442.1px;width:100.2px">2.2 / 2.3</span><i class="rl"></i></div>
<div class="row w" style="top:659.77px"><span class="c a">Machine1&nbsp;Prs&nbsp;Inlet</span><span class="c n" style="left:251.6px;width:104.6px">0.3 / 0.4</span><span class="c n mb" style="left:355.2px;width:85.9px">1.4</span><span class="c n" style="left:442.1px;width:100.2px">2.2 / 2.3</span><i class="rl"></i></div>
<div class="row g" style="top:670.61px"><span class="c a">Machine1&nbsp;Prs&nbsp;Outlet</span><span class="c n" style="left:251.6px;width:104.6px">0.3 / 0.4</span><span class="c n mb" style="left:355.2px;width:85.9px">1.2</span><span class="c n" style="left:442.1px;width:100.2px">2.2 / 2.3</span><i class="rl"></i></div>
<div class="row w" style="top:681.44px"><span class="c a">Machine2&nbsp;Prs&nbsp;Inlet</span><span class="c n" style="left:251.6px;width:104.6px">0.3 / 0.4</span><span class="c n mb" style="left:355.2px;width:85.9px">1.3</span><span class="c n" style="left:442.1px;width:100.2px">2.2 / 2.3</span><i class="rl"></i></div>
<div class="row g" style="top:692.27px"><span class="c a">Machine2&nbsp;Prs&nbsp;Outlet</span><span class="c n" style="left:251.6px;width:104.6px">0.3 / 0.4</span><span class="c n mb" style="left:355.2px;width:85.9px">1.0</span><span class="c n" style="left:442.1px;width:100.2px">2.2 / 2.3</span><i class="rl"></i></div>
<div class="row w" style="top:703.11px"><span class="c a">System&nbsp;Temp&nbsp;Inlet</span><span class="c n" style="left:251.6px;width:104.6px">1 / 5</span><span class="c n mb" style="left:355.2px;width:85.9px">24.3</span><span class="c n" style="left:442.1px;width:100.2px">55 / 60</span><i class="rl"></i></div>
<div class="row g" style="top:713.94px"><span class="c a">System&nbsp;Temp&nbsp;Outlet</span><span class="c n" style="left:251.6px;width:104.6px">1 / 5</span><span class="c n mb" style="left:355.2px;width:85.9px">25.3</span><span class="c n" style="left:442.1px;width:100.2px">55 / 60</span><i class="rl"></i></div>
<div class="row w" style="top:724.78px"><span class="c a">Machine1&nbsp;Temp&nbsp;Inlet</span><span class="c n" style="left:251.6px;width:104.6px">1 / 5</span><span class="c n mb" style="left:355.2px;width:85.9px">24.5</span><span class="c n" style="left:442.1px;width:100.2px">55 / 60</span><i class="rl"></i></div>
<div class="row g" style="top:735.61px"><span class="c a">Machine1&nbsp;Temp&nbsp;Outlet</span><span class="c n" style="left:251.6px;width:104.6px">1 / 5</span><span class="c n mb" style="left:355.2px;width:85.9px">25.4</span><span class="c n" style="left:442.1px;width:100.2px">55 / 60</span><i class="rl"></i></div>
<div class="row w" style="top:746.44px"><span class="c a">Machine2&nbsp;Temp&nbsp;Inlet</span><span class="c n" style="left:251.6px;width:104.6px">1 / 5</span><span class="c n mb" style="left:355.2px;width:85.9px">24.2</span><span class="c n" style="left:442.1px;width:100.2px">55 / 60</span><i class="rl"></i></div>
<div class="row g" style="top:757.28px"><span class="c a">Machine2&nbsp;Temp&nbsp;Outlet</span><span class="c n" style="left:251.6px;width:104.6px">1 / 5</span><span class="c n mb" style="left:355.2px;width:85.9px">25.0</span><span class="c n" style="left:442.1px;width:100.2px">55 / 60</span><i class="rl"></i></div>
<div class="row w" style="top:768.11px"><span class="c a">Gear1&nbsp;Temp&nbsp;Outlet</span><span class="c n" style="left:251.6px;width:104.6px">1 / 5</span><span class="c n mb" style="left:355.2px;width:85.9px">27.3</span><span class="c n" style="left:442.1px;width:100.2px">75 / 80</span><i class="rl"></i></div>
<div class="row g" style="top:778.95px"><span class="c a">Gear2&nbsp;Temp&nbsp;Outlet</span><span class="c n" style="left:251.6px;width:104.6px">1 / 5</span><span class="c n mb" style="left:355.2px;width:85.9px">24.4</span><span class="c n" style="left:442.1px;width:100.2px">75 / 80</span><i class="rl"></i></div>
<div class="row w" style="top:789.78px"><span class="c a">Cooling&nbsp;System&nbsp;Error</span><span class="c n" style="left:251.6px;width:104.6px">0 / -1</span><span class="c n mg" style="left:355.2px;width:85.9px">0.0</span><span class="c n" style="left:442.1px;width:100.2px">2 / 1</span><i class="rl"></i></div>
<div class="row g" style="top:800.61px"><span class="c a"></span><span class="c n" style="left:251.6px;width:104.6px"></span><span class="c n" style="left:356.2px;width:83.9px"></span><span class="c n" style="left:442.1px;width:100.2px"></span><i class="rl"></i></div>
<div class="row w" style="top:811.45px"><span class="c a"></span><span class="c n" style="left:251.6px;width:104.6px"></span><span class="c n" style="left:356.2px;width:83.9px"></span><span class="c n" style="left:442.1px;width:100.2px"></span><i class="rl"></i></div>
<div class="vl" style="left:251.6px"></div>
<div class="vl" style="left:356.2px"></div>
<div class="vl" style="left:440.1px"></div>
</div>
<div class="tbl" style="left:1018.4px;width:540.3px">
<div class="hdr" style="width:538.3px"><span class="h" style="left:-1px;width:251.8px">Alias</span><span class="h" style="left:249.3px;width:104.9px;word-spacing:3px">LL / LW</span><span class="h" style="left:355.2px;width:84.1px">Meas</span><span class="h" style="left:443.3px;width:97.5px;word-spacing:2px">UW / UL</span></div>
<div class="row w" style="top:31.40px"><span class="c a">Ta&nbsp;B1&nbsp;HSS</span><span class="c n" style="left:250.8px;width:104.9px">15 / 20</span><span class="c n mb" style="left:354.7px;width:86.1px">NaN</span><span class="c n" style="left:441.8px;width:99.5px">90 / 95</span><i class="rl"></i></div>
<div class="row g" style="top:42.23px"><span class="c a">Ta&nbsp;B2&nbsp;HSS</span><span class="c n" style="left:250.8px;width:104.9px">15 / 20</span><span class="c n mb" style="left:354.7px;width:86.1px">NaN</span><span class="c n" style="left:441.8px;width:99.5px">90 / 95</span><i class="rl"></i></div>
<div class="row w" style="top:53.07px"><span class="c a">Ta&nbsp;B3&nbsp;HSS</span><span class="c n" style="left:250.8px;width:104.9px">15 / 20</span><span class="c n mb" style="left:354.7px;width:86.1px">NaN</span><span class="c n" style="left:441.8px;width:99.5px">90 / 95</span><i class="rl"></i></div>
<div class="row g" style="top:63.90px"><span class="c a">Ta&nbsp;B&nbsp;LDA1</span><span class="c n" style="left:250.8px;width:104.9px">15 / 20</span><span class="c n mb" style="left:354.7px;width:86.1px">NaN</span><span class="c n" style="left:441.8px;width:99.5px">90 / 95</span><i class="rl"></i></div>
<div class="row w" style="top:74.74px"><span class="c a">Ta&nbsp;B&nbsp;LDA2</span><span class="c n" style="left:250.8px;width:104.9px">15 / 20</span><span class="c n mb" style="left:354.7px;width:86.1px">NaN</span><span class="c n" style="left:441.8px;width:99.5px">90 / 95</span><i class="rl"></i></div>
<div class="row g" style="top:85.57px"><span class="c a">Ta&nbsp;Inlet</span><span class="c n" style="left:250.8px;width:104.9px">15 / 55</span><span class="c n mb" style="left:354.7px;width:86.1px">NaN</span><span class="c n" style="left:441.8px;width:99.5px">65 / 95</span><i class="rl"></i></div>
<div class="row w" style="top:96.40px"><span class="c a">Ta&nbsp;oil&nbsp;tank</span><span class="c n" style="left:250.8px;width:104.9px">49 / 50</span><span class="c n mg" style="left:354.7px;width:86.1px">62.5</span><span class="c n" style="left:441.8px;width:99.5px">75 / 80</span><i class="rl"></i></div>
<div class="row g" style="top:107.24px"><span class="c a">ISOCode4um</span><span class="c n" style="left:250.8px;width:104.9px">/</span><span class="c n mb" style="left:354.7px;width:86.1px">NaN</span><span class="c n" style="left:441.8px;width:99.5px">/</span><i class="rl"></i></div>
<div class="row w" style="top:118.07px"><span class="c a">ISOCode6um</span><span class="c n" style="left:250.8px;width:104.9px">0 /</span><span class="c n mb" style="left:354.7px;width:86.1px">NaN</span><span class="c n" style="left:441.8px;width:99.5px">/ 14</span><i class="rl"></i></div>
<div class="row g" style="top:128.91px"><span class="c a">ISOCode14um</span><span class="c n" style="left:250.8px;width:104.9px">0 /</span><span class="c n mb" style="left:354.7px;width:86.1px">NaN</span><span class="c n" style="left:441.8px;width:99.5px">/ 11</span><i class="rl"></i></div>
<div class="row w" style="top:139.74px"><span class="c a">ISOCode21um</span><span class="c n" style="left:250.8px;width:104.9px">/</span><span class="c n mb" style="left:354.7px;width:86.1px">NaN</span><span class="c n" style="left:441.8px;width:99.5px">/</span><i class="rl"></i></div>
<div class="row g" style="top:150.57px"><span class="c a">Flow&nbsp;1</span><span class="c n" style="left:250.8px;width:104.9px">/</span><span class="c n mg" style="left:354.7px;width:86.1px">TRUE</span><span class="c n" style="left:441.8px;width:99.5px">/</span><i class="rl"></i></div>
<div class="row w" style="top:161.41px"><span class="c a">Flow&nbsp;2</span><span class="c n" style="left:250.8px;width:104.9px">/</span><span class="c n mg" style="left:354.7px;width:86.1px">FALSE</span><span class="c n" style="left:441.8px;width:99.5px">/</span><i class="rl"></i></div>
<div class="row g" style="top:172.24px"><span class="c a">MP2</span><span class="c n" style="left:250.8px;width:104.9px">1 / 1.5</span><span class="c n mb" style="left:354.7px;width:86.1px">NaN</span><span class="c n" style="left:441.8px;width:99.5px">3.4 / 3.5</span><i class="rl"></i></div>
<div class="row w" style="top:183.08px"><span class="c a">M&nbsp;filt&nbsp;difpre</span><span class="c n" style="left:250.8px;width:104.9px">-2 / -1</span><span class="c n mg" style="left:354.7px;width:86.1px">-0.0</span><span class="c n" style="left:441.8px;width:99.5px">2 / 3</span><i class="rl"></i></div>
<div class="row g" style="top:193.91px"><span class="c a">Of&nbsp;filt&nbsp;difpre</span><span class="c n" style="left:250.8px;width:104.9px">-2 / -1</span><span class="c n mg" style="left:354.7px;width:86.1px">0.0</span><span class="c n" style="left:441.8px;width:99.5px">2 / 3</span><i class="rl"></i></div>
<div class="row w" style="top:204.74px"><span class="c a">Col&nbsp;filt&nbsp;difpre</span><span class="c n" style="left:250.8px;width:104.9px">-2 / -1</span><span class="c n mg" style="left:354.7px;width:86.1px">-0.0</span><span class="c n" style="left:441.8px;width:99.5px">2 / 3</span><i class="rl"></i></div>
<div class="row g" style="top:215.58px"><span class="c a">Torque&nbsp;1</span><span class="c n" style="left:250.8px;width:104.9px">/</span><span class="c n mb" style="left:354.7px;width:86.1px">NaN</span><span class="c n" style="left:441.8px;width:99.5px">/</span><i class="rl"></i></div>
<div class="row w" style="top:226.41px"><span class="c a">A&nbsp;fz&nbsp;HS</span><span class="c n" style="left:250.8px;width:104.9px">0 /</span><span class="c n" style="left:355.7px;width:84.1px">Disabled</span><span class="c n" style="left:441.8px;width:99.5px">/ 1.4</span><i class="rl"></i></div>
<div class="row g" style="top:237.25px"><span class="c a">A&nbsp;2fz&nbsp;HS</span><span class="c n" style="left:250.8px;width:104.9px">0 /</span><span class="c n" style="left:355.7px;width:84.1px">Disabled</span><span class="c n" style="left:441.8px;width:99.5px">/ 1.0</span><i class="rl"></i></div>
<div class="row w" style="top:248.08px"><span class="c a">A&nbsp;3fz&nbsp;HS</span><span class="c n" style="left:250.8px;width:104.9px">0 /</span><span class="c n" style="left:355.7px;width:84.1px">Disabled</span><span class="c n" style="left:441.8px;width:99.5px">/ 0.5</span><i class="rl"></i></div>
<div class="row g" style="top:258.91px"><span class="c a">B&nbsp;fz&nbsp;HS</span><span class="c n" style="left:250.8px;width:104.9px">0 /</span><span class="c n" style="left:355.7px;width:84.1px">Disabled</span><span class="c n" style="left:441.8px;width:99.5px">/ 2.0</span><i class="rl"></i></div>
<div class="row w" style="top:269.75px"><span class="c a">B&nbsp;2fz&nbsp;HS</span><span class="c n" style="left:250.8px;width:104.9px">0 /</span><span class="c n" style="left:355.7px;width:84.1px">Disabled</span><span class="c n" style="left:441.8px;width:99.5px">/ 1.0</span><i class="rl"></i></div>
<div class="row g" style="top:280.58px"><span class="c a">B&nbsp;3fz&nbsp;HS</span><span class="c n" style="left:250.8px;width:104.9px">0 /</span><span class="c n" style="left:355.7px;width:84.1px">Disabled</span><span class="c n" style="left:441.8px;width:99.5px">/ 0.5</span><i class="rl"></i></div>
<div class="row w" style="top:291.42px"><span class="c a">C&nbsp;fz&nbsp;HS</span><span class="c n" style="left:250.8px;width:104.9px">0 /</span><span class="c n" style="left:355.7px;width:84.1px">Disabled</span><span class="c n" style="left:441.8px;width:99.5px">/ 1.2</span><i class="rl"></i></div>
<div class="row g" style="top:302.25px"><span class="c a">C&nbsp;2fz&nbsp;HS</span><span class="c n" style="left:250.8px;width:104.9px">0 /</span><span class="c n" style="left:355.7px;width:84.1px">Disabled</span><span class="c n" style="left:441.8px;width:99.5px">/ 1.0</span><i class="rl"></i></div>
<div class="row w" style="top:313.08px"><span class="c a">C&nbsp;3fz&nbsp;HS</span><span class="c n" style="left:250.8px;width:104.9px">0 /</span><span class="c n" style="left:355.7px;width:84.1px">Disabled</span><span class="c n" style="left:441.8px;width:99.5px">/ 0.5</span><i class="rl"></i></div>
<div class="row g" style="top:323.92px"><span class="c a">D&nbsp;fz&nbsp;HS</span><span class="c n" style="left:250.8px;width:104.9px">0 /</span><span class="c n" style="left:355.7px;width:84.1px">Disabled</span><span class="c n" style="left:441.8px;width:99.5px">/ 1.2</span><i class="rl"></i></div>
<div class="row w" style="top:334.75px"><span class="c a">D&nbsp;2fz&nbsp;HS</span><span class="c n" style="left:250.8px;width:104.9px">0 /</span><span class="c n" style="left:355.7px;width:84.1px">Disabled</span><span class="c n" style="left:441.8px;width:99.5px">/ 1.0</span><i class="rl"></i></div>
<div class="row g" style="top:345.59px"><span class="c a">D&nbsp;3fz&nbsp;HS</span><span class="c n" style="left:250.8px;width:104.9px">0 /</span><span class="c n" style="left:355.7px;width:84.1px">Disabled</span><span class="c n" style="left:441.8px;width:99.5px">/ 0.5</span><i class="rl"></i></div>
<div class="row w" style="top:356.42px"><span class="c a">E&nbsp;fz&nbsp;HS</span><span class="c n" style="left:250.8px;width:104.9px">0 /</span><span class="c n" style="left:355.7px;width:84.1px">Disabled</span><span class="c n" style="left:441.8px;width:99.5px">/ 1.2</span><i class="rl"></i></div>
<div class="row g" style="top:367.25px"><span class="c a">E&nbsp;2fz&nbsp;HS</span><span class="c n" style="left:250.8px;width:104.9px">0 /</span><span class="c n" style="left:355.7px;width:84.1px">Disabled</span><span class="c n" style="left:441.8px;width:99.5px">/ 1.3</span><i class="rl"></i></div>
<div class="row w" style="top:378.09px"><span class="c a">E&nbsp;3fz&nbsp;HS</span><span class="c n" style="left:250.8px;width:104.9px">0 /</span><span class="c n" style="left:355.7px;width:84.1px">Disabled</span><span class="c n" style="left:441.8px;width:99.5px">/ 0.5</span><i class="rl"></i></div>
<div class="row g" style="top:388.92px"><span class="c a">F&nbsp;fz&nbsp;HS</span><span class="c n" style="left:250.8px;width:104.9px">0 /</span><span class="c n" style="left:355.7px;width:84.1px">Disabled</span><span class="c n" style="left:441.8px;width:99.5px">/ 1.2</span><i class="rl"></i></div>
<div class="row w" style="top:399.76px"><span class="c a">F&nbsp;2fz&nbsp;HS</span><span class="c n" style="left:250.8px;width:104.9px">0 /</span><span class="c n" style="left:355.7px;width:84.1px">Disabled</span><span class="c n" style="left:441.8px;width:99.5px">/ 1.3</span><i class="rl"></i></div>
<div class="row g" style="top:410.59px"><span class="c a">F&nbsp;3fz&nbsp;HS</span><span class="c n" style="left:250.8px;width:104.9px">0 /</span><span class="c n" style="left:355.7px;width:84.1px">Disabled</span><span class="c n" style="left:441.8px;width:99.5px">/ 0.5</span><i class="rl"></i></div>
<div class="row w" style="top:421.42px"><span class="c a">G&nbsp;fz&nbsp;IS</span><span class="c n" style="left:250.8px;width:104.9px">0 /</span><span class="c n" style="left:355.7px;width:84.1px">Disabled</span><span class="c n" style="left:441.8px;width:99.5px">/ 0.6</span><i class="rl"></i></div>
<div class="row g" style="top:432.26px"><span class="c a">G&nbsp;2fz&nbsp;IS</span><span class="c n" style="left:250.8px;width:104.9px">0 /</span><span class="c n" style="left:355.7px;width:84.1px">Disabled</span><span class="c n" style="left:441.8px;width:99.5px">/ 0.6</span><i class="rl"></i></div>
<div class="row w" style="top:443.09px"><span class="c a">G&nbsp;3fz&nbsp;IS</span><span class="c n" style="left:250.8px;width:104.9px">0 /</span><span class="c n" style="left:355.7px;width:84.1px">Disabled</span><span class="c n" style="left:441.8px;width:99.5px">/ 0.5</span><i class="rl"></i></div>
<div class="row g" style="top:453.93px"><span class="c a">G&nbsp;4fz&nbsp;IS</span><span class="c n" style="left:250.8px;width:104.9px">0 /</span><span class="c n" style="left:355.7px;width:84.1px">Disabled</span><span class="c n" style="left:441.8px;width:99.5px">/ 0.5</span><i class="rl"></i></div>
<div class="row w" style="top:464.76px"><span class="c a">G&nbsp;5fz&nbsp;IS</span><span class="c n" style="left:250.8px;width:104.9px">0 /</span><span class="c n" style="left:355.7px;width:84.1px">Disabled</span><span class="c n" style="left:441.8px;width:99.5px">/ 0.5</span><i class="rl"></i></div>
<div class="row g" style="top:475.59px"><span class="c a">H&nbsp;fz&nbsp;IS</span><span class="c n" style="left:250.8px;width:104.9px">0 /</span><span class="c n" style="left:355.7px;width:84.1px">Disabled</span><span class="c n" style="left:441.8px;width:99.5px">/ 0.6</span><i class="rl"></i></div>
<div class="row w" style="top:486.43px"><span class="c a">H&nbsp;2fz&nbsp;IS</span><span class="c n" style="left:250.8px;width:104.9px">0 /</span><span class="c n" style="left:355.7px;width:84.1px">Disabled</span><span class="c n" style="left:441.8px;width:99.5px">/ 0.6</span><i class="rl"></i></div>
<div class="row g" style="top:497.26px"><span class="c a">H&nbsp;3fz&nbsp;IS</span><span class="c n" style="left:250.8px;width:104.9px">0 /</span><span class="c n" style="left:355.7px;width:84.1px">Disabled</span><span class="c n" style="left:441.8px;width:99.5px">/ 0.5</span><i class="rl"></i></div>
<div class="row w" style="top:508.10px"><span class="c a">H&nbsp;4fz&nbsp;IS</span><span class="c n" style="left:250.8px;width:104.9px">0 /</span><span class="c n" style="left:355.7px;width:84.1px">Disabled</span><span class="c n" style="left:441.8px;width:99.5px">/ 0.5</span><i class="rl"></i></div>
<div class="row g" style="top:518.93px"><span class="c a">H&nbsp;5fz&nbsp;IS</span><span class="c n" style="left:250.8px;width:104.9px">0 /</span><span class="c n" style="left:355.7px;width:84.1px">Disabled</span><span class="c n" style="left:441.8px;width:99.5px">/ 0.5</span><i class="rl"></i></div>
<div class="row w" style="top:529.76px"><span class="c a">I&nbsp;fz&nbsp;LS</span><span class="c n" style="left:250.8px;width:104.9px">0 /</span><span class="c n" style="left:355.7px;width:84.1px">Disabled</span><span class="c n" style="left:441.8px;width:99.5px">/ 0.9</span><i class="rl"></i></div>
<div class="row g" style="top:540.60px"><span class="c a">I&nbsp;2fz&nbsp;LS</span><span class="c n" style="left:250.8px;width:104.9px">0 /</span><span class="c n" style="left:355.7px;width:84.1px">Disabled</span><span class="c n" style="left:441.8px;width:99.5px">/ 0.9</span><i class="rl"></i></div>
<div class="row w" style="top:551.43px"><span class="c a">I&nbsp;3fz&nbsp;LS</span><span class="c n" style="left:250.8px;width:104.9px">0 /</span><span class="c n" style="left:355.7px;width:84.1px">Disabled</span><span class="c n" style="left:441.8px;width:99.5px">/ 0.6</span><i class="rl"></i></div>
<div class="row g" style="top:562.27px"><span class="c a">I&nbsp;4fz&nbsp;LS</span><span class="c n" style="left:250.8px;width:104.9px">0 /</span><span class="c n" style="left:355.7px;width:84.1px">Disabled</span><span class="c n" style="left:441.8px;width:99.5px">/ 0.6</span><i class="rl"></i></div>
<div class="row w" style="top:573.10px"><span class="c a">I&nbsp;5fz&nbsp;LS</span><span class="c n" style="left:250.8px;width:104.9px">0 /</span><span class="c n" style="left:355.7px;width:84.1px">Disabled</span><span class="c n" style="left:441.8px;width:99.5px">/ 0.6</span><i class="rl"></i></div>
<div class="row g" style="top:583.93px"><span class="c a">J&nbsp;fz&nbsp;LS</span><span class="c n" style="left:250.8px;width:104.9px">0 /</span><span class="c n" style="left:355.7px;width:84.1px">Disabled</span><span class="c n" style="left:441.8px;width:99.5px">/ 0.6</span><i class="rl"></i></div>
<div class="row w" style="top:594.77px"><span class="c a">J&nbsp;2fz&nbsp;LS</span><span class="c n" style="left:250.8px;width:104.9px">0 /</span><span class="c n" style="left:355.7px;width:84.1px">Disabled</span><span class="c n" style="left:441.8px;width:99.5px">/ 0.6</span><i class="rl"></i></div>
<div class="row g" style="top:605.60px"><span class="c a">J&nbsp;3fz&nbsp;LS</span><span class="c n" style="left:250.8px;width:104.9px">0 /</span><span class="c n" style="left:355.7px;width:84.1px">Disabled</span><span class="c n" style="left:441.8px;width:99.5px">/ 0.6</span><i class="rl"></i></div>
<div class="row w" style="top:616.44px"><span class="c a">J&nbsp;4fz&nbsp;LS</span><span class="c n" style="left:250.8px;width:104.9px">0 /</span><span class="c n" style="left:355.7px;width:84.1px">Disabled</span><span class="c n" style="left:441.8px;width:99.5px">/ 0.6</span><i class="rl"></i></div>
<div class="row g" style="top:627.27px"><span class="c a">J&nbsp;5fz&nbsp;LS</span><span class="c n" style="left:250.8px;width:104.9px">0 /</span><span class="c n" style="left:355.7px;width:84.1px">Disabled</span><span class="c n" style="left:441.8px;width:99.5px">/ 0.6</span><i class="rl"></i></div>
<div class="row w" style="top:638.10px"><span class="c a">System&nbsp;Prs&nbsp;Inlet</span><span class="c n" style="left:250.8px;width:104.9px">0.3 / 0.4</span><span class="c n mb" style="left:354.7px;width:86.1px">NaN</span><span class="c n" style="left:441.8px;width:99.5px">2.2 / 2.3</span><i class="rl"></i></div>
<div class="row g" style="top:648.94px"><span class="c a">System&nbsp;Prs&nbsp;Outlet</span><span class="c n" style="left:250.8px;width:104.9px">0.3 / 0.4</span><span class="c n mb" style="left:354.7px;width:86.1px">NaN</span><span class="c n" style="left:441.8px;width:99.5px">2.2 / 2.3</span><i class="rl"></i></div>
<div class="row w" style="top:659.77px"><span class="c a">Machine1&nbsp;Prs&nbsp;Inlet</span><span class="c n" style="left:250.8px;width:104.9px">0.3 / 0.4</span><span class="c n mb" style="left:354.7px;width:86.1px">NaN</span><span class="c n" style="left:441.8px;width:99.5px">2.2 / 2.3</span><i class="rl"></i></div>
<div class="row g" style="top:670.61px"><span class="c a">Machine1&nbsp;Prs&nbsp;Outlet</span><span class="c n" style="left:250.8px;width:104.9px">0.3 / 0.4</span><span class="c n mb" style="left:354.7px;width:86.1px">NaN</span><span class="c n" style="left:441.8px;width:99.5px">2.2 / 2.3</span><i class="rl"></i></div>
<div class="row w" style="top:681.44px"><span class="c a">Machine2&nbsp;Prs&nbsp;Inlet</span><span class="c n" style="left:250.8px;width:104.9px">0.3 / 0.4</span><span class="c n mb" style="left:354.7px;width:86.1px">NaN</span><span class="c n" style="left:441.8px;width:99.5px">2.2 / 2.3</span><i class="rl"></i></div>
<div class="row g" style="top:692.27px"><span class="c a">Machine2&nbsp;Prs&nbsp;Outlet</span><span class="c n" style="left:250.8px;width:104.9px">0.3 / 0.4</span><span class="c n mb" style="left:354.7px;width:86.1px">NaN</span><span class="c n" style="left:441.8px;width:99.5px">2.2 / 2.3</span><i class="rl"></i></div>
<div class="row w" style="top:703.11px"><span class="c a">System&nbsp;Temp&nbsp;Inlet</span><span class="c n" style="left:250.8px;width:104.9px">1 / 5</span><span class="c n mb" style="left:354.7px;width:86.1px">NaN</span><span class="c n" style="left:441.8px;width:99.5px">55 / 60</span><i class="rl"></i></div>
<div class="row g" style="top:713.94px"><span class="c a">System&nbsp;Temp&nbsp;Outlet</span><span class="c n" style="left:250.8px;width:104.9px">1 / 5</span><span class="c n mb" style="left:354.7px;width:86.1px">NaN</span><span class="c n" style="left:441.8px;width:99.5px">55 / 60</span><i class="rl"></i></div>
<div class="row w" style="top:724.78px"><span class="c a">Machine1&nbsp;Temp&nbsp;Inlet</span><span class="c n" style="left:250.8px;width:104.9px">1 / 5</span><span class="c n mb" style="left:354.7px;width:86.1px">NaN</span><span class="c n" style="left:441.8px;width:99.5px">55 / 60</span><i class="rl"></i></div>
<div class="row g" style="top:735.61px"><span class="c a">Machine1&nbsp;Temp&nbsp;Outlet</span><span class="c n" style="left:250.8px;width:104.9px">1 / 5</span><span class="c n mb" style="left:354.7px;width:86.1px">NaN</span><span class="c n" style="left:441.8px;width:99.5px">55 / 60</span><i class="rl"></i></div>
<div class="row w" style="top:746.44px"><span class="c a">Machine2&nbsp;Temp&nbsp;Inlet</span><span class="c n" style="left:250.8px;width:104.9px">1 / 5</span><span class="c n mb" style="left:354.7px;width:86.1px">NaN</span><span class="c n" style="left:441.8px;width:99.5px">55 / 60</span><i class="rl"></i></div>
<div class="row g" style="top:757.28px"><span class="c a">Machine2&nbsp;Temp&nbsp;Outlet</span><span class="c n" style="left:250.8px;width:104.9px">1 / 5</span><span class="c n mb" style="left:354.7px;width:86.1px">NaN</span><span class="c n" style="left:441.8px;width:99.5px">55 / 60</span><i class="rl"></i></div>
<div class="row w" style="top:768.11px"><span class="c a">Gear1&nbsp;Temp&nbsp;Outlet</span><span class="c n" style="left:250.8px;width:104.9px">1 / 5</span><span class="c n mb" style="left:354.7px;width:86.1px">NaN</span><span class="c n" style="left:441.8px;width:99.5px">75 / 80</span><i class="rl"></i></div>
<div class="row g" style="top:778.95px"><span class="c a">Gear2&nbsp;Temp&nbsp;Outlet</span><span class="c n" style="left:250.8px;width:104.9px">1 / 5</span><span class="c n mb" style="left:354.7px;width:86.1px">NaN</span><span class="c n" style="left:441.8px;width:99.5px">75 / 80</span><i class="rl"></i></div>
<div class="row w" style="top:789.78px"><span class="c a">Cooling&nbsp;System&nbsp;Error</span><span class="c n" style="left:250.8px;width:104.9px">0 / -1</span><span class="c n mg" style="left:354.7px;width:86.1px">0.0</span><span class="c n" style="left:441.8px;width:99.5px">2 / 1</span><i class="rl"></i></div>
<div class="row g" style="top:800.61px"><span class="c a"></span><span class="c n" style="left:250.8px;width:104.9px"></span><span class="c n" style="left:355.7px;width:84.1px"></span><span class="c n" style="left:441.8px;width:99.5px"></span><i class="rl"></i></div>
<div class="row w" style="top:811.45px"><span class="c a"></span><span class="c n" style="left:250.8px;width:104.9px"></span><span class="c n" style="left:355.7px;width:84.1px"></span><span class="c n" style="left:441.8px;width:99.5px"></span><i class="rl"></i></div>
<div class="vl" style="left:250.8px"></div>
<div class="vl" style="left:355.7px"></div>
<div class="vl" style="left:439.8px"></div>
</div>

<div class="t" style="left:59.19px;top:54.35px;font-size:24.27px;color:#111;transform:scaleX(1.0169);transform-origin:0 0;">Operator Name</div>
<div class="t" style="left:57.21px;top:86.76px;font-size:23.98px;color:#111;transform:scaleX(1.0430);transform-origin:0 0;">Operator</div>
<div class="t" style="left:39.59px;top:126.35px;font-size:24.27px;color:#111;transform:scaleX(1.0557);transform-origin:0 0;">Status Information</div>
<div class="t" style="left:136.84px;top:184.72px;font-size:16.72px;color:#1c1c1c;transform:scaleX(1.0603);transform-origin:0 0;">CONTROLROOM</div>
<div class="t" style="left:90.54px;top:241.72px;font-size:16.72px;color:#1c1c1c;transform:scaleX(1.0609);transform-origin:0 0;">ZONE 2</div>
<div class="t" style="left:272.84px;top:241.72px;font-size:16.72px;color:#1c1c1c;transform:scaleX(1.0616);transform-origin:0 0;">ZONE 1</div>
<div class="t" style="left:112.10px;top:289.61px;font-size:9.59px;color:#222;transform:scaleX(0.8805);transform-origin:0 0;-webkit-text-stroke:0.25px #222;">START</div>
<div class="t" style="left:288.84px;top:289.73px;font-size:9.59px;color:#222;transform:scaleX(0.9095);transform-origin:0 0;-webkit-text-stroke:0.25px #222;">START</div>
<div class="t" style="left:112.17px;top:565.12px;font-size:24.56px;color:#0d0d0d;transform:scaleX(0.9346);transform-origin:0 0;">TEST GEAR 1</div>
<div class="t" style="left:198.07px;top:736.37px;font-size:24.27px;color:#111;transform:scaleX(0.9453);transform-origin:0 0;">ABORT</div>
<div class="t" style="left:56.47px;top:781.89px;font-size:23.47px;color:#111;transform:scaleX(1.0547);transform-origin:0 0;">Sequence</div>
<div class="t" style="left:80.63px;top:816.89px;font-size:23.47px;color:#111;transform:scaleX(1.0911);transform-origin:0 0;">043# Init Oil System</div>
<div class="t" style="left:56.68px;top:848.56px;font-size:23.26px;color:#111;transform:scaleX(1.0834);transform-origin:0 0;">Performing Step 10 of 67</div>
<div class="t" style="left:58.10px;top:893.91px;font-size:23.26px;color:#111;transform:scaleX(1.1170);transform-origin:0 0;">Test Time</div>
<div class="t" style="left:58.15px;top:929.37px;font-size:22.53px;color:#111;transform:scaleX(1.1272);transform-origin:0 0;">00:00:52 hh:mm:ss</div>
<div class="t" style="left:1339.31px;top:86.71px;font-size:22.89px;color:#111;transform:scaleX(1.0157);transform-origin:0 0;">Reload I/O Points</div>
<div class="t" style="left:474.95px;top:129.11px;font-size:15.60px;color:#111;transform:scaleX(0.9565);transform-origin:0 0;">GEAR 1</div>
<div class="t" style="left:1018.69px;top:128.40px;font-size:15.60px;color:#111;transform:scaleX(0.9690);transform-origin:0 0;">GEAR 2</div>
<div class="t" style="left:476.95px;top:90.04px;font-size:19.77px;color:#1a1a1a;transform:scaleX(0.9796);transform-origin:0 0;">Zone_1</div>
<div class="t" style="left:562.12px;top:91.72px;font-size:19.62px;color:#1a1a1a;transform:scaleX(0.9942);transform-origin:0 0;">Zone_2</div>
<div class="t" style="left:645.72px;top:91.74px;font-size:19.62px;color:#1a1a1a;transform:scaleX(0.9915);transform-origin:0 0;">Calibration</div>
<div class="t" style="left:755.72px;top:90.86px;font-size:19.04px;color:#1a1a1a;transform:scaleX(1.0257);transform-origin:0 0;">Messages</div>
<!-- scrollbar -->
<div class="abs" style="left:1561px;top:178px;width:14px;height:795px;background:#f6f6f0"></div>
<div class="abs" style="left:1562px;top:180px;width:12px;height:12px;background:#c5d4f5;border-radius:2px"></div>
<svg class="abs" style="left:1562px;top:180px" width="12" height="12"><path d="M3 8 L6 5 L9 8" stroke="#4d6185" stroke-width="1.5" fill="none"/></svg>
<div class="abs" style="left:1562px;top:194px;width:12px;height:31px;background:#c1d2f6;border-radius:2px;border:1px solid #b4c6ee"></div>
<div class="abs" style="left:1562px;top:962px;width:12px;height:11px;background:#c5d4f5;border-radius:2px"></div>
<svg class="abs" style="left:1562px;top:962px" width="12" height="11"><path d="M3 4 L6 7 L9 4" stroke="#4d6185" stroke-width="1.5" fill="none"/></svg>

<!-- bottom strip -->
<div class="abs" style="left:0;top:970px;width:1600px;height:3px;background:#3d70d8"></div>
<div class="abs" style="left:0;top:970px;width:77px;height:3px;background:#3c9a3c"></div>
</body></html>
